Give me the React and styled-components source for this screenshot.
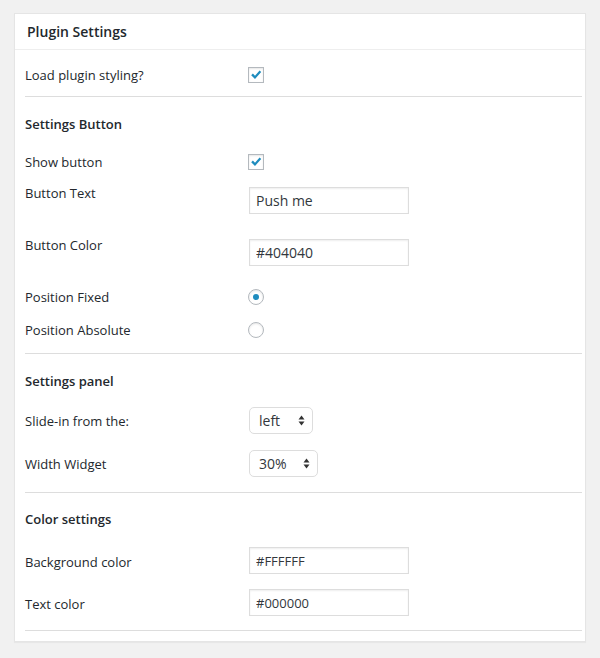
import React from "react"
import styled, { createGlobalStyle, css } from "styled-components"

const GlobalStyle = createGlobalStyle`
  html, body {
    margin: 0;
    padding: 0;
    background: #f1f1f1;
  }
  body {
    font-family: "Open Sans", "Liberation Sans", sans-serif;
    font-size: 13px;
    color: #23282d;
  }
`

const Page = styled.div`
  padding: 13px 14px 16px 14px;
`

const Card = styled.div`
  background: #fff;
  border: 1px solid #e5e5e5;
  box-shadow: 0 1px 1px rgba(0, 0, 0, 0.04);
`

const Header = styled.h3`
  margin: 0;
  height: 35px;
  line-height: 35px;
  padding-left: 12px;
  font-size: 14px;
  font-weight: 600;
  color: #23282d;
  border-bottom: 1px solid #eee;
`

const Inside = styled.div`
  padding: 0 3px 10px 10px;
`

const Separator = styled.hr`
  margin: ${(p) => p.$top || 0}px 0 0 0;
  border: 0;
  height: 1px;
  background: #ddd;
`

const Heading = styled.div`
  margin-top: ${(p) => p.$top}px;
  height: 20px;
  line-height: 20px;
  font-weight: 600;
  color: #23282d;
`

const Row = styled.div`
  display: grid;
  grid-template-columns: 223px 1fr;
  height: ${(p) => p.$h}px;
  margin-top: ${(p) => p.$top}px;
  align-items: center;
`

const Label = styled.span`
  line-height: 20px;
  color: #23282d;
  position: relative;
  top: ${(p) => p.$nudge || 0}px;
`

const Control = styled.div`
  display: flex;
`

const boxBase = css`
  width: 16px;
  height: 16px;
  box-sizing: border-box;
  border: 1px solid #b4b9be;
  background: #fff;
  box-shadow: inset 0 1px 2px rgba(0, 0, 0, 0.1);
  display: flex;
  align-items: center;
  justify-content: center;
`

const CheckBox = styled.span`
  ${boxBase}
`

const Radio = styled.span`
  ${boxBase}
  border-radius: 50%;
`

const Dot = styled.span`
  width: 6px;
  height: 6px;
  border-radius: 50%;
  background: #1e8cbe;
`

const TextInput = styled.input`
  width: 160px;
  height: 27px;
  box-sizing: border-box;
  margin: 0 0 0 1px;
  padding: 0 6px;
  border: 1px solid #ddd;
  box-shadow: inset 0 1px 2px rgba(0, 0, 0, 0.07);
  font-family: "Open Sans", "Liberation Sans", sans-serif;
  font-size: ${(p) => p.$size || 14}px;
  color: #32373c;
  background: #fff;
  outline: none;
`

const Select = styled.div`
  width: ${(p) => p.$width}px;
  height: 27px;
  box-sizing: border-box;
  margin-left: 1px;
  border: 1px solid #ddd;
  border-radius: 5px;
  background: #fff;
  display: flex;
  align-items: center;
  justify-content: space-between;
  padding: 0 7px 0 9px;
  font-size: 14px;
  color: #32373c;
`

const Check = () => (
  <svg width="14" height="14" viewBox="0 0 14 14">
    <path
      d="M2.2 7.2 L3.9 5.6 L6 7.7 L10.6 2.6 L12.2 4.1 L6 10.9 Z"
      fill="#1e8cbe"
    />
  </svg>
)

const Arrows = () => (
  <svg width="7" height="11" viewBox="0 0 7 11">
    <path d="M3.5 0.5 L6.5 4.5 L0.5 4.5 Z" fill="#333" />
    <path d="M3.5 10.5 L6.5 6.5 L0.5 6.5 Z" fill="#333" />
  </svg>
)

const CheckRow = ({ top, label }) => (
  <Row $top={top} $h={16}>
    <Label>{label}</Label>
    <Control>
      <CheckBox>
        <Check />
      </CheckBox>
    </Control>
  </Row>
)

const RadioRow = ({ top, label, checked }) => (
  <Row $top={top} $h={16}>
    <Label>{label}</Label>
    <Control>
      <Radio>{checked && <Dot />}</Radio>
    </Control>
  </Row>
)

const InputRow = ({ top, label, value, size, nudge }) => (
  <Row $top={top} $h={27}>
    <Label $nudge={nudge}>{label}</Label>
    <Control>
      <TextInput defaultValue={value} $size={size} />
    </Control>
  </Row>
)

const SelectRow = ({ top, label, value, width }) => (
  <Row $top={top} $h={27}>
    <Label>{label}</Label>
    <Control>
      <Select $width={width}>
        <span>{value}</span>
        <Arrows />
      </Select>
    </Control>
  </Row>
)

const App = () => (
  <>
    <GlobalStyle />
    <Page>
      <Card>
        <Header>Plugin Settings</Header>
        <Inside>
          <CheckRow top={15} label="Load plugin styling?" />
          <Separator $top={15} />

          <Heading $top={17}>Settings Button</Heading>
          <CheckRow top={18} label="Show button" />
          <InputRow top={19} label="Button Text" value="Push me" nudge={-8} />
          <InputRow top={25} label="Button Color" value="#404040" nudge={-8} />
          <RadioRow top={21} label="Position Fixed" checked />
          <RadioRow top={17} label="Position Absolute" />
          <Separator $top={17} />

          <Heading $top={17}>Settings panel</Heading>
          <SelectRow top={16} label="Slide-in from the:" value="left" width={64} />
          <SelectRow top={16} label="Width Widget" value="30%" width={69} />
          <Separator $top={15} />

          <Heading $top={16}>Color settings</Heading>
          <InputRow top={18} label="Background color" value="#FFFFFF" size={13} nudge={1} />
          <InputRow top={15} label="Text color" value="#000000" size={13} nudge={1} />
          <Separator $top={14} />
        </Inside>
      </Card>
    </Page>
  </>
)

export default App
